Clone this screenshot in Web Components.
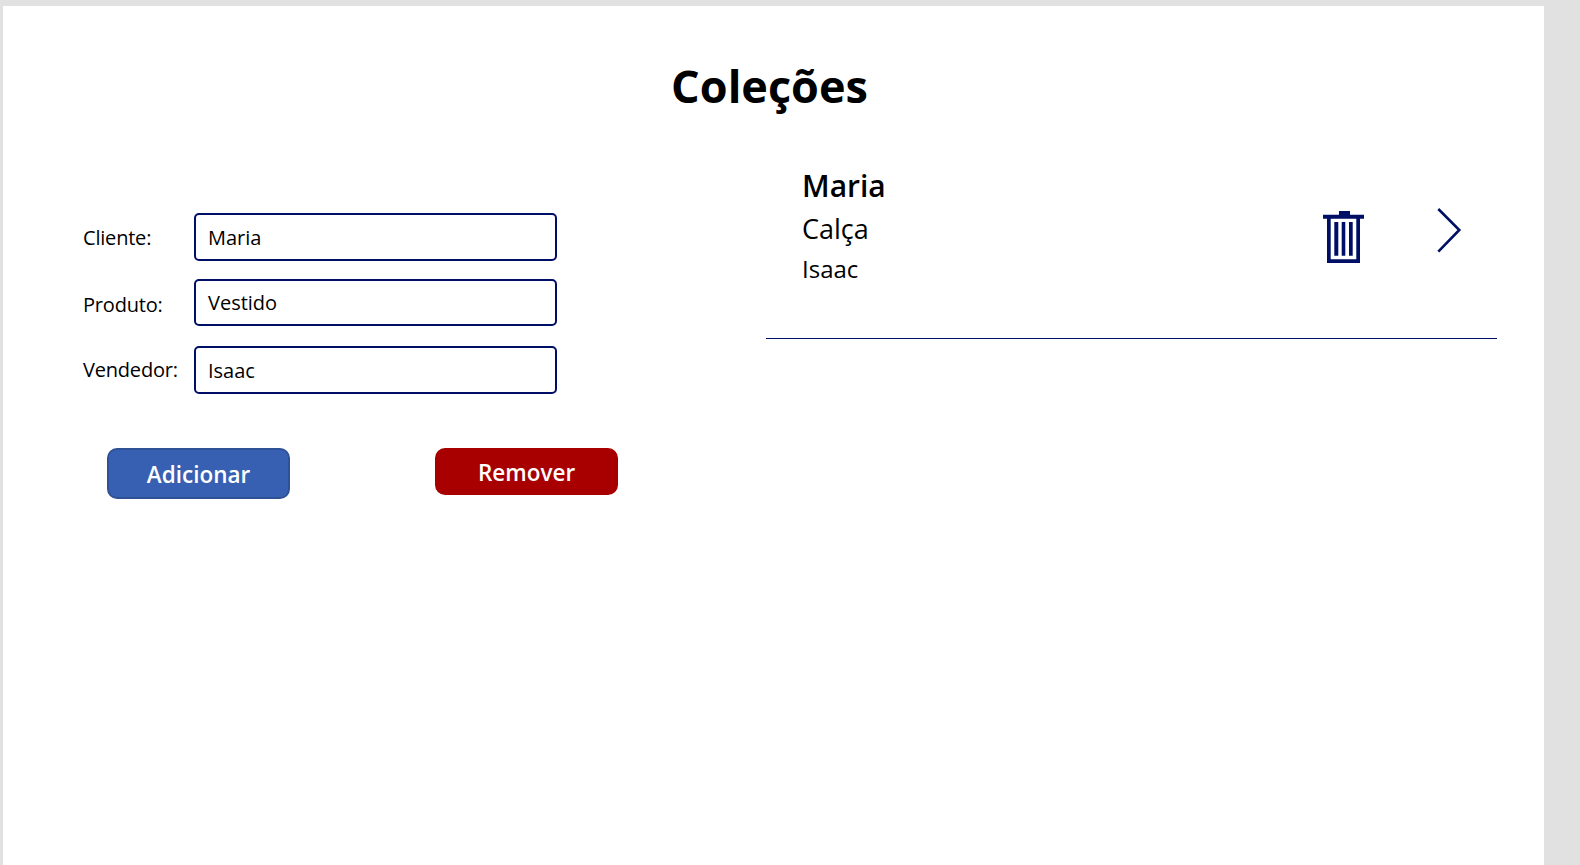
<!DOCTYPE html>
<html lang="pt"><head><meta charset="utf-8"><title>Coleções</title>
<style>
html,body{margin:0;height:100%;overflow:hidden;background:#e1e1e1;font-family:"Open Sans",sans-serif;color:#000}
</style></head><body>
<app-screen>
  <h-title slot="title">Coleções</h-title>
  <form-row slot="form" label="Cliente:" style="--label-shift:1px;--value-shift:1px">Maria</form-row>
  <form-row slot="form" label="Produto:" style="--label-shift:2px;--value-shift:0px;--h:47px;--gap:18px">Vestido</form-row>
  <form-row slot="form" label="Vendedor:" style="--label-shift:0px;--value-shift:1px;--gap:20px">Isaac</form-row>
  <app-button slot="actions" style="--bg:#3860b2;--bd:#2f5297;--h:51px;--shift:2px">Adicionar</app-button>
  <app-button slot="actions" style="--bg:#a80000;--bd:#a80000;--h:47px;--shift:2px">Remover</app-button>
  <list-item slot="list" name="Maria" product="Calça" seller="Isaac"></list-item>
</app-screen>
<script>
function def(name, html){
  customElements.define(name, class extends HTMLElement{
    constructor(){super();const s=this.attachShadow({mode:'open'});s.innerHTML=html;}
    connectedCallback(){
      this.shadowRoot.querySelectorAll('[data-attr]').forEach(n=>{n.textContent=this.getAttribute(n.dataset.attr)||''});
    }
  });
}
def('app-screen',`<style>
:host{display:block;width:1541px;height:859px;margin:6px 0 0 3px;background:#fff;overflow:hidden}
.title{display:flex;justify-content:center;padding:50px 8px 0 0;height:110px;box-sizing:border-box}
.main{display:grid;grid-template-columns:763px 731px;}
.form{padding:96.500px 0 0 80px}
.fields{display:flex;flex-direction:column;width:475px}
.actions{display:flex;gap:145px;padding:54px 0 0 24px;align-items:flex-start}
</style>
<div class="title"><slot name="title"></slot></div>
<div class="main">
  <div class="form"><div class="fields"><slot name="form"></slot></div><div class="actions"><slot name="actions"></slot></div></div>
  <div class="list"><slot name="list"></slot></div>
</div>`);
def('h-title',`<style>:host{display:block;font:700 45px/60px "Open Sans",sans-serif;color:#000;height:60px}</style><slot></slot>`);
def('form-row',`<style>
:host{display:grid;grid-template-columns:110.500px 363px;align-items:center;margin-top:var(--gap,0);font:400 20px/27px "Open Sans",sans-serif;color:#000}
.label{position:relative;top:var(--label-shift,0);letter-spacing:-.2px}
.box{box-sizing:border-box;height:var(--h,48px);border:2px solid #000f66;border-radius:5px;background:#fff;padding:0 12.500px;display:flex;align-items:center}
.box span{position:relative;top:var(--value-shift,0)}
</style><div class="label" data-attr="label"></div><div class="box"><span><slot></slot></span></div>`);
def('app-button',`<style>
:host{display:flex;align-items:center;justify-content:center;box-sizing:border-box;width:183px;height:var(--h);background:var(--bg);border:2px solid var(--bd);border-radius:10px;color:#fff;font:600 22.500px/32px "Open Sans",sans-serif}
span{position:relative;top:var(--shift,0)}
</style><span><slot></slot></span>`);
def('list-item',`<style>
:host{display:block;box-sizing:border-box;position:relative;border-bottom:1.500px solid #000f66;padding:51px 0 0 36px;width:731px;height:223px;color:#000}
.name{font:600 30px/38px "Open Sans",sans-serif;height:44px}
.line{font:400 27px/36px "Open Sans",sans-serif;height:40px}
.line.small{font-size:24px}
svg{position:absolute;display:block}
</style>
<div class="name" data-attr="name"></div>
<div class="line" data-attr="product"></div>
<div class="line small" data-attr="seller"></div>
<svg style="left:557px;top:94.500px" width="42" height="54" viewBox="0 0 42 54" aria-hidden="true" fill="#000f66">
  <path d="M16 0h11v3.700h-11zM0 3.700h41v4h-41z"/>
  <path fill-rule="evenodd" d="M4 7h33v45H4zM7.700 7v41.300h25.600V7z"/>
  <path d="M11.300 11h4v33.700h-4zM18.700 11h3.600v33.700h-3.600zM26 11h3.700v33.700H26z"/>
</svg>
<svg style="left:669px;top:89px" width="30" height="50" viewBox="0 0 30 50" aria-hidden="true" fill="none" stroke="#000f66" stroke-width="2.600">
  <path d="M3.300 4 L24.300 25 L3.300 46.700"/>
</svg>`);
</script>
</body></html>
